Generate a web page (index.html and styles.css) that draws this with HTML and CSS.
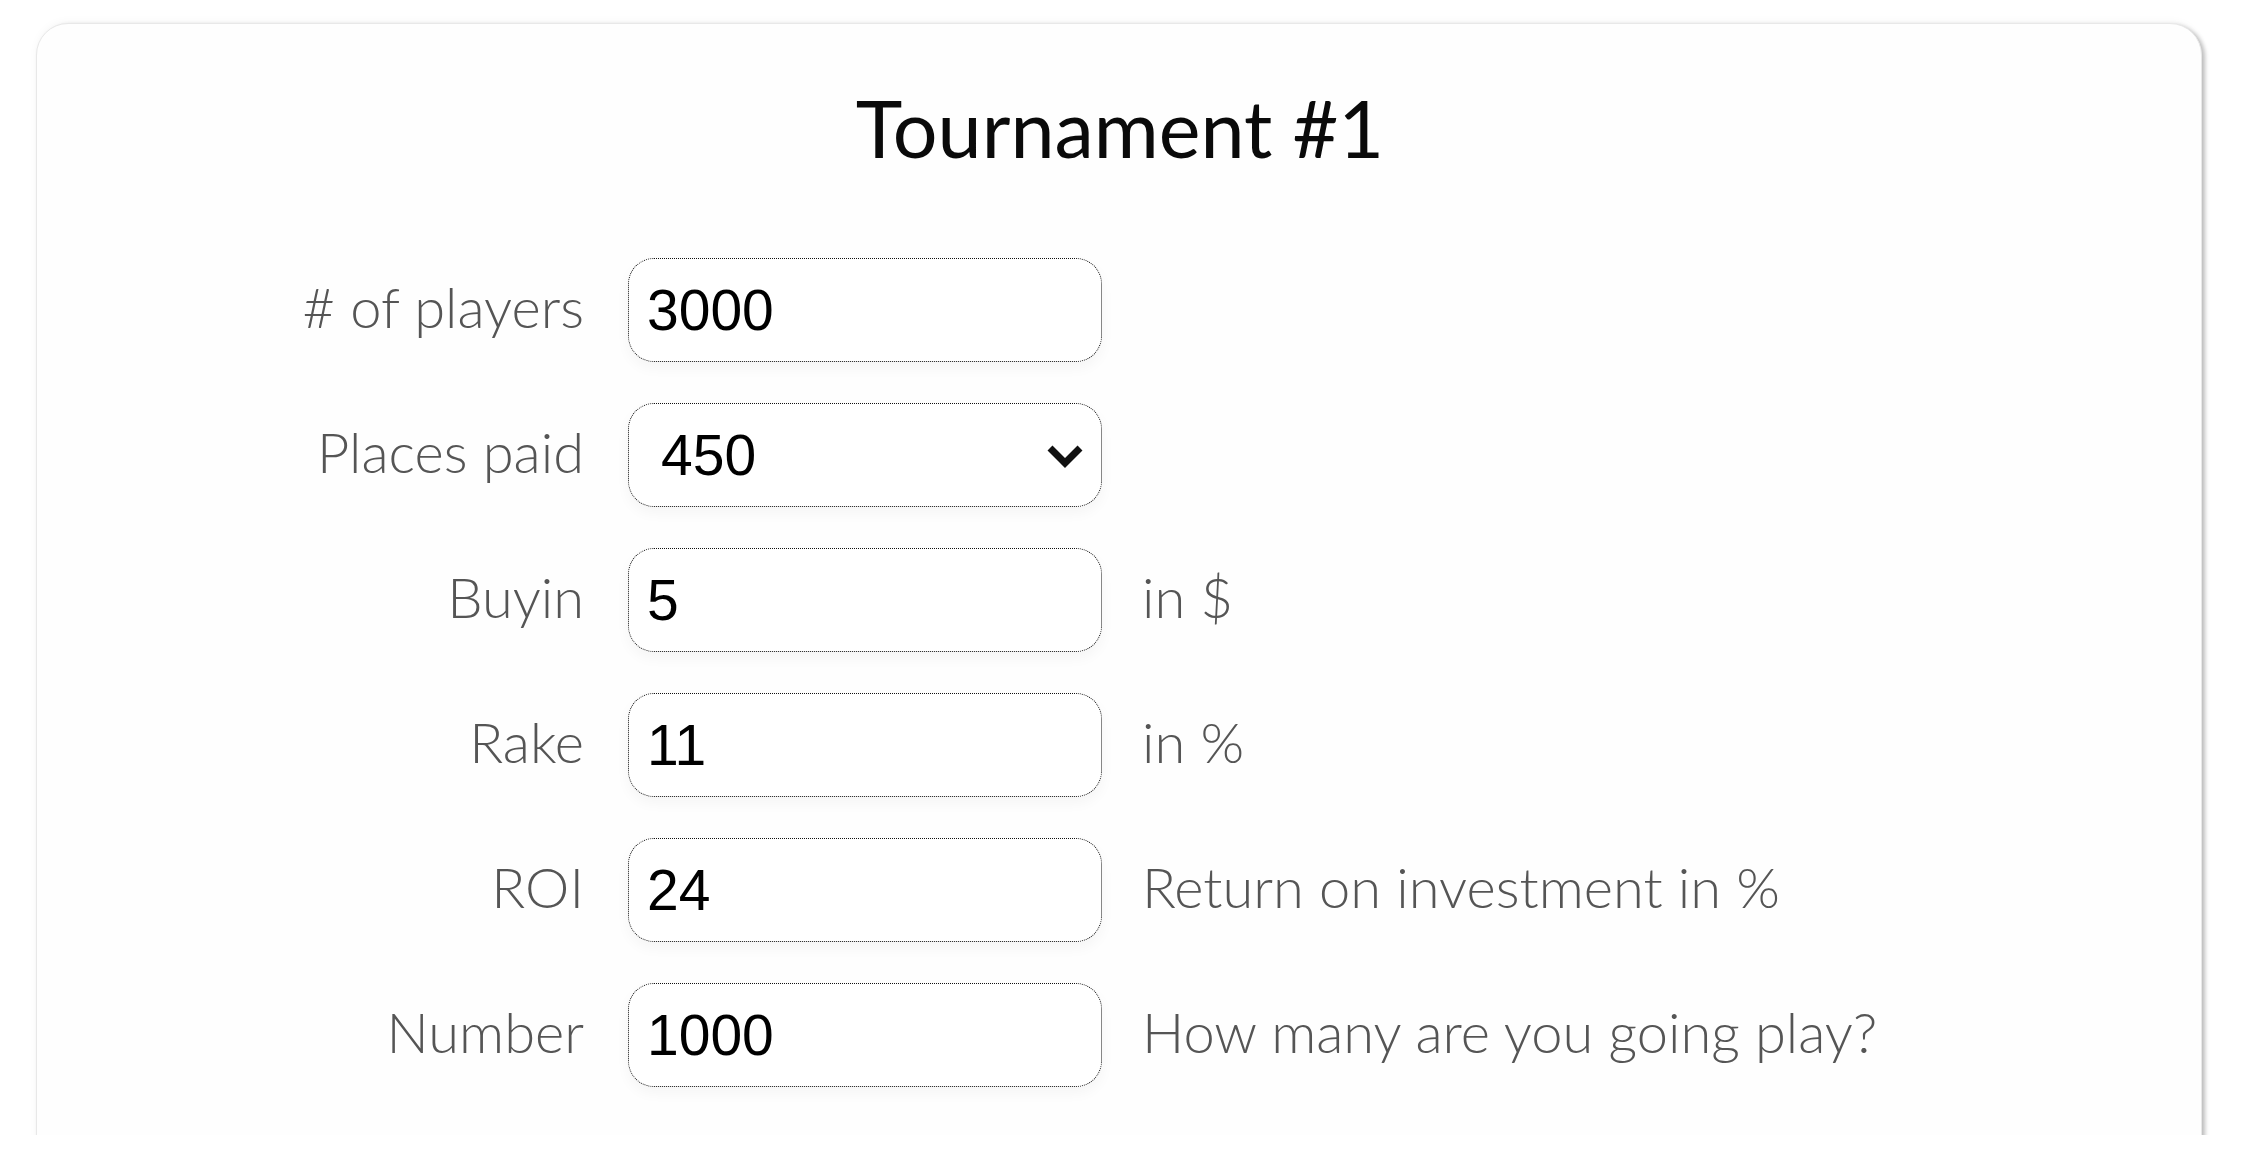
FILE: index.html
```html
<!DOCTYPE html>
<html lang="en">
<head>
<meta charset="utf-8">
<title>Tournament #1</title>
<link rel="stylesheet" href="styles.css">
</head>
<body>
<div class="page">
  <section class="card">
    <h1 class="title">Tournament #1</h1>
    <form class="form">
      <label class="label" for="players"># of players</label>
      <input class="field" id="players" type="text" value="3000">
      <span class="hint"></span>

      <label class="label" for="paid">Places paid</label>
      <div class="select-wrap">
        <select class="field select" id="paid">
          <option>450</option>
        </select>
        <svg class="chevron" viewBox="0 0 40 26" width="40" height="26" aria-hidden="true">
          <path d="M5 5 L20 20 L35 5" fill="none" stroke="#111" stroke-width="7" stroke-linejoin="miter"/>
        </svg>
      </div>
      <span class="hint"></span>

      <label class="label" for="buyin">Buyin</label>
      <input class="field" id="buyin" type="text" value="5">
      <span class="hint">in $</span>

      <label class="label" for="rake">Rake</label>
      <input class="field" id="rake" type="text" value="11">
      <span class="hint">in %</span>

      <label class="label" for="roi">ROI</label>
      <input class="field" id="roi" type="text" value="24">
      <span class="hint">Return on investment in %</span>

      <label class="label" for="number">Number</label>
      <input class="field" id="number" type="text" value="1000">
      <span class="hint">How many are you going play?</span>
    </form>
  </section>
</div>
</body>
</html>
```
FILE: styles.css
```css
html, body {
  margin: 0;
  padding: 0;
  background: #ffffff;
}

.page {
  box-sizing: border-box;
  height: 1135px;
  overflow: hidden;
  padding: 23px 46px 0 36px;
}

.card {
  box-sizing: border-box;
  height: 1300px;
  background: #fefefe;
  border: 1px solid #e8e8e8;
  border-radius: 32px;
  box-shadow: 3px 2px 4px rgba(0, 0, 0, 0.25), 0 -2px 8px rgba(0, 0, 0, 0.03);
  padding: 57px 40px 0 64px;
  font-family: Lato, "Open Sans", sans-serif;
}

.title {
  margin: 0 0 82px 0;
  text-align: center;
  font-family: Lato, sans-serif;
  font-weight: 400;
  font-size: 79px;
  line-height: 1.2;
  color: #0a0a0a;
  padding-right: 22px;
}

.form {
  display: grid;
  grid-template-columns: 483px 474px auto;
  grid-auto-rows: 104px;
  column-gap: 44px;
  row-gap: 41px;
  align-items: center;
}

.label {
  justify-self: end;
  font-family: Lato, sans-serif;
  font-weight: 300;
  font-size: 56px;
  color: #555555;
  line-height: 1.2;
  margin-top: -6px;
}

.hint {
  margin-left: -4px;
  font-family: Lato, sans-serif;
  font-weight: 300;
  font-size: 56px;
  color: #555555;
  line-height: 1.2;
  margin-top: -6px;
  white-space: nowrap;
}

.field {
  box-sizing: border-box;
  width: 474px;
  height: 104px;
  margin: 0;
  padding: 0 18px;
  border: 1px dotted #111;
  border-radius: 26px;
  background: #ffffff;
  font-family: "Liberation Sans", Arial, sans-serif;
  font-size: 57px;
  color: #000;
  outline: none;
  box-shadow: 0 6px 14px rgba(0, 0, 0, 0.04);
}

.select-wrap {
  position: relative;
  width: 474px;
  height: 104px;
}

.select {
  appearance: none;
  -webkit-appearance: none;
  padding-left: 32px;
}

.chevron {
  position: absolute;
  right: 17px;
  top: 40px;
  pointer-events: none;
}
```
